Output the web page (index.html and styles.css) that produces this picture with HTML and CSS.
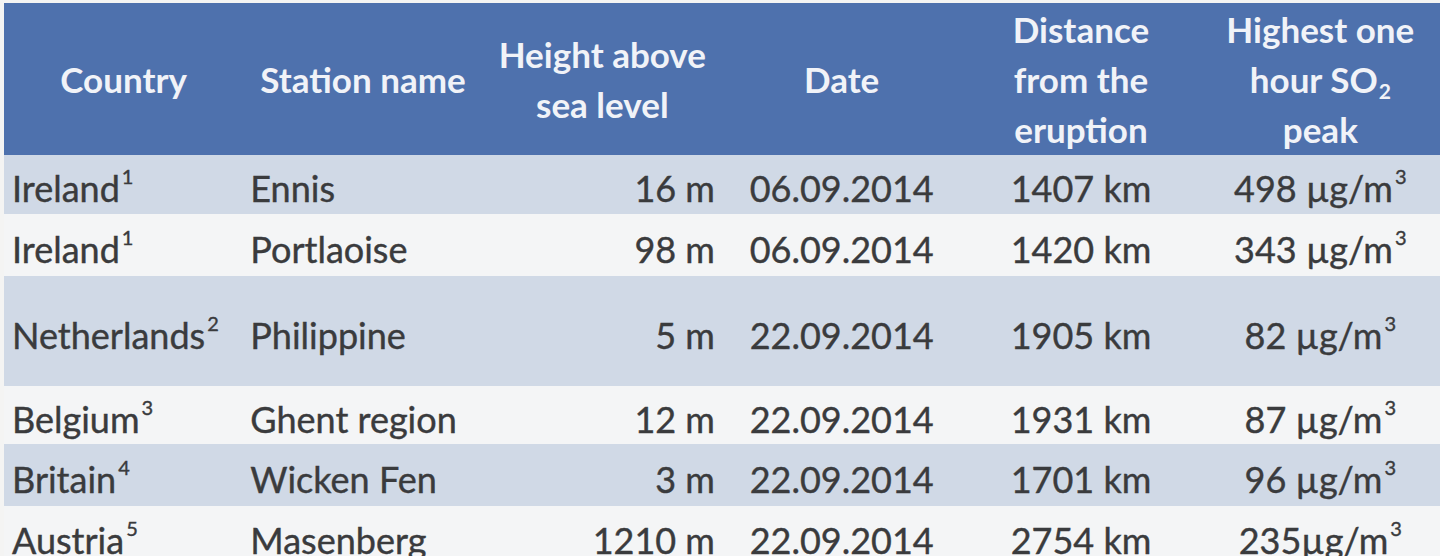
FILE: index.html
```html
<!DOCTYPE html>
<html lang="en">
<head>
<meta charset="utf-8">
<title>SO2 peaks</title>
<link rel="stylesheet" href="styles.css">
</head>
<body>
<table class="data">
  <colgroup>
    <col><col><col><col><col><col>
  </colgroup>
  <thead>
    <tr class="head">
      <th>Country</th>
      <th>Station name</th>
      <th>Height above<br>sea level</th>
      <th>Date</th>
      <th>Distance<br>from the<br>eruption</th>
      <th>Highest one<br>hour SO<sub class="sub">2</sub><br>peak</th>
    </tr>
  </thead>
  <tbody>
    <tr class="r1 shade">
      <td class="c-left">Ireland<sup class="sup">1</sup></td>
      <td class="c-name">Ennis</td>
      <td class="c-right">16 m</td>
      <td class="c-mid">06.09.2014</td>
      <td class="c-mid">1407 km</td>
      <td class="c-mid">498 µg/m<sup class="sup">3</sup></td>
    </tr>
    <tr class="r2">
      <td class="c-left">Ireland<sup class="sup">1</sup></td>
      <td class="c-name">Portlaoise</td>
      <td class="c-right">98 m</td>
      <td class="c-mid">06.09.2014</td>
      <td class="c-mid">1420 km</td>
      <td class="c-mid">343 µg/m<sup class="sup">3</sup></td>
    </tr>
    <tr class="r3 shade">
      <td class="c-left">Netherlands<sup class="sup">2</sup></td>
      <td class="c-name">Philippine</td>
      <td class="c-right">5 m</td>
      <td class="c-mid">22.09.2014</td>
      <td class="c-mid">1905 km</td>
      <td class="c-mid">82 µg/m<sup class="sup">3</sup></td>
    </tr>
    <tr class="r4">
      <td class="c-left">Belgium<sup class="sup">3</sup></td>
      <td class="c-name">Ghent region</td>
      <td class="c-right">12 m</td>
      <td class="c-mid">22.09.2014</td>
      <td class="c-mid">1931 km</td>
      <td class="c-mid">87 µg/m<sup class="sup">3</sup></td>
    </tr>
    <tr class="r5 shade">
      <td class="c-left">Britain<sup class="sup">4</sup></td>
      <td class="c-name">Wicken Fen</td>
      <td class="c-right">3 m</td>
      <td class="c-mid">22.09.2014</td>
      <td class="c-mid">1701 km</td>
      <td class="c-mid">96 µg/m<sup class="sup">3</sup></td>
    </tr>
    <tr class="r6">
      <td class="c-left">Austria<sup class="sup">5</sup></td>
      <td class="c-name">Masenberg</td>
      <td class="c-right">1210 m</td>
      <td class="c-mid">22.09.2014</td>
      <td class="c-mid">2754 km</td>
      <td class="c-mid">235µg/m<sup class="sup">3</sup></td>
    </tr>
  </tbody>
</table>
</body>
</html>
```

FILE: styles.css
```css
html, body {
  margin: 0;
  padding: 0;
  background: #f4f4f3;
  overflow: hidden;
}

body {
  padding: 3px 0 0 4px;
  font-family: Lato, "Liberation Sans", sans-serif;
}

.data {
  width: 1436px;
  table-layout: fixed;
  border-collapse: collapse;
  border-spacing: 0;
  color: #3a3b3d;
}

.data th,
.data td {
  padding: 0;
  white-space: nowrap;
}

.head {
  height: 152px;
  background: #4e71ad;
}

.head th {
  color: #f1f3f8;
  font-weight: 700;
  font-size: 35px;
  line-height: 50px;
  text-align: center;
  vertical-align: middle;
}

.data td {
  font-size: 36px;
  line-height: 43px;
  vertical-align: middle;
  padding-top: 8px;
  -webkit-text-stroke: 0.4px #3a3b3d;
}

.shade { background: #d0d9e6; }
.r2, .r4, .r6 { background: #f4f5f6; }

.r1 { height: 59px; }
.r2 { height: 62px; }
.r3 { height: 110px; }
.r4 { height: 58px; }
.r5 { height: 62px; }
.r6 { height: 60px; }

.c-left { text-align: left; padding-left: 8px !important; }
.c-name { text-align: left; padding-left: 7px !important; }
.c-right { text-align: right; padding-right: 7px !important; }
.c-mid { text-align: center; }

.sup {
  font-size: 20px;
  line-height: 0;
  vertical-align: 18px;
  margin-left: 2px;
}

.sub {
  font-size: 21px;
  line-height: 0;
  vertical-align: -6px;
  margin-left: 1px;
}
```
